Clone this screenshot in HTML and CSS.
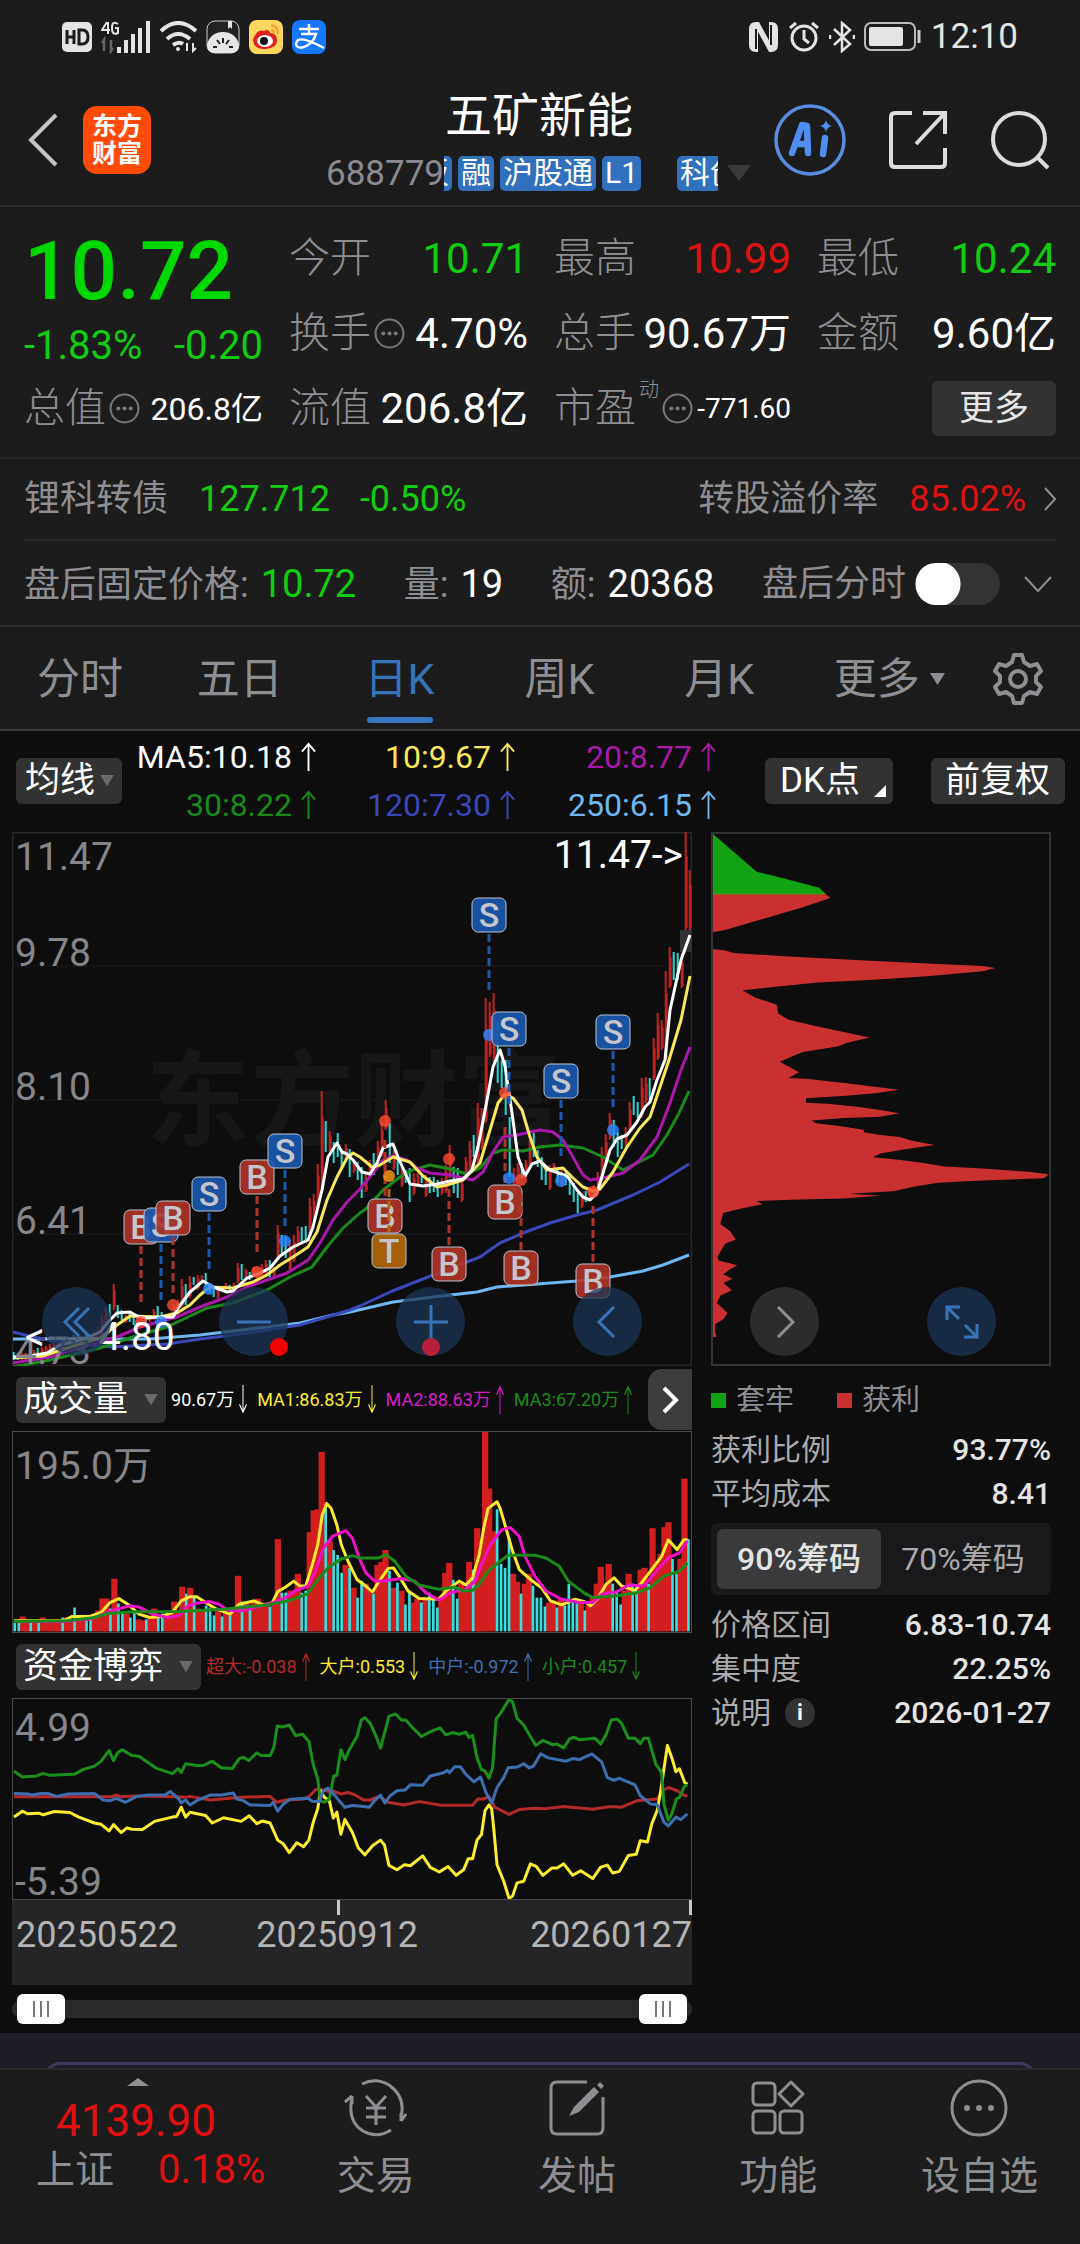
FILE: index.html
```html
<!DOCTYPE html>
<html lang="zh-CN">
<head>
<meta charset="utf-8">
<meta name="viewport" content="width=device-width, initial-scale=1">
<title>五矿新能 688779</title>
<link rel="stylesheet" href="styles.css">
</head>
<body>
<svg class="defs" aria-hidden="true">
  <symbol id="up" viewBox="0 0 16 30" preserveAspectRatio="none"><path d="M8 30V2M1 10L8 2l7 8"/></symbol>
  <symbol id="down" viewBox="0 0 16 30" preserveAspectRatio="none"><path d="M8 0v28M1 20l7 8 7-8"/></symbol>
  <symbol id="more" viewBox="0 0 30 30"><circle cx="15" cy="15" r="13.5" fill="none" stroke="#77777b" stroke-width="2"/><g fill="#77777b"><circle cx="9" cy="15" r="2"/><circle cx="15" cy="15" r="2"/><circle cx="21" cy="15" r="2"/></g></symbol>
</svg>

<div class="status">
  <div class="status-side">
    <svg width="30" height="30" viewBox="0 0 30 30"><rect width="30" height="30" rx="5" fill="#e4e4e4"/><path d="M5 8v14M12 8v14M5 15h7M17 8v14h3q6 0 6-7t-6-7z" fill="none" stroke="#1c1c1c" stroke-width="3"/></svg>
    <svg width="50" height="34" viewBox="0 0 50 34" fill="none" stroke="#e4e4e4"><path d="M6 2L1 10h8M7 2v12M17 4q-6-4-6 4t6 5V8h-3" stroke-width="2"/><path d="M3 31V20l-2 3M10 20v11l2-3" stroke="#666" stroke-width="2.500"/><path d="M18 27v6M25 20v13M32 14v19M39 8v25M47 1v32" stroke-width="4"/></svg>
    <svg width="37" height="32" viewBox="0 0 37 32" fill="none" stroke="#e4e4e4" stroke-width="4"><path d="M1 10Q18-6 36 10M7 18q11-10 23 0"/><path d="M13 24q6-4 10-1"/><circle cx="18" cy="28" r="2" fill="#e4e4e4" stroke="none"/><path d="M27 22v8M33 22v8l3-3" stroke-width="2"/></svg>
    <svg width="34" height="34" viewBox="0 0 34 34"><rect x="1" y="1" width="32" height="32" rx="8" fill="#222" stroke="#ccc"/><path d="M1 33V24Q5 12 17 12t16 12v1q0 8-8 8H9q-8 0-8-8z" fill="#e6e6e6"/><path d="M22 1h4v8l-2-2-2 2z" fill="#e6e6e6"/><path d="M17 18v5M11 20l3 4M23 20l-3 4M7 27h4M23 27h4" stroke="#222" stroke-width="2"/></svg>
    <svg width="34" height="34" viewBox="0 0 34 34"><rect width="34" height="34" rx="8" fill="#ffd75e"/><path d="M4 20Q8 8 15 11q5-3 6 2 6 0 7 6 1 9-11 10T4 20z" fill="#e02020"/><ellipse cx="16" cy="21" rx="8" ry="6" fill="#fff"/><circle cx="15" cy="21" r="4" fill="#111"/><path d="M22 5q7 1 7 9M22 10q3 0 3 4" fill="none" stroke="#f59a23" stroke-width="2"/></svg>
    <svg width="34" height="34" viewBox="0 0 34 34"><rect width="34" height="34" rx="8" fill="#1677ff"/><path d="M7 9h20M17 4v9M9 14h15q-2 7-8 11-6 4-10 2t0-7q6-3 26 8" fill="none" stroke="#fff" stroke-width="2.500"/></svg>
  </div>
  <div class="status-side">
    <svg width="31" height="32" viewBox="0 0 31 32"><path d="M10 1H8Q1 1 1 8v16q0 7 7 7h2zM21 31h2q7 0 7-7V8q0-7-7-7h-2z" fill="#e4e4e4"/><path d="M8 1h3l13 24v6h-3L8 7z" fill="#e4e4e4"/><path d="M8 8v20M23 4v20" stroke="#1c1c1c" stroke-width="2"/></svg>
    <svg width="32" height="32" viewBox="0 0 32 32" fill="none" stroke="#e4e4e4" stroke-width="3"><circle cx="16" cy="17" r="12"/><path d="M16 9v9l5 4M2 7l6-5M30 7l-6-5"/></svg>
    <svg width="26" height="32" viewBox="0 0 26 32" fill="none" stroke="#e4e4e4" stroke-width="2.500"><path d="M5 8l16 15-8 7V2l8 7L5 24"/><path d="M1 14v4M25 14v4"/></svg>
    <svg width="58" height="30" viewBox="0 0 58 30"><rect x="1" y="1" width="50" height="27" rx="6" fill="none" stroke="#bbb" stroke-width="2"/><rect x="5" y="5" width="34" height="19" rx="2" fill="#e4e4e4"/><path d="M55 8v13" stroke="#ccc" stroke-width="3"/></svg>
    <span class="clock">12:10</span>
  </div>
</div>

<header class="header">
  <div class="header-left">
    <button class="icon-btn" aria-label="返回"><svg width="30" height="54" viewBox="0 0 30 54" fill="none" stroke="#c4c4c4" stroke-width="4"><path d="M28 2L3 27l25 25"/></svg></button>
    <div class="logo">东方<br>财富</div>
  </div>
  <div class="title">
    <h1>五矿新能</h1>
    <div class="tags">
      <span class="code">688779</span>
      <div class="tag-window"><span class="tag tag-cut">板</span><span class="tag">融</span><span class="tag">沪股通</span><span class="tag">L1</span><span class="tag tag-next">科创</span></div>
      <svg width="24" height="16" viewBox="0 0 24 16"><path d="M0 0h24L12 16z" fill="#3a3a3a"/></svg>
    </div>
  </div>
  <div class="header-right">
    <button class="icon-btn" aria-label="AI"><svg width="72" height="72" viewBox="0 0 72 72"><circle cx="36" cy="36" r="34" fill="none" stroke="#5a8de0" stroke-width="3.500"/><g fill="none" stroke="#4f8df0" stroke-width="6.500" stroke-linejoin="round" stroke-linecap="round"><path d="M18 49l10-28 5 1 1 27M22 40h11"/><path d="M51 34l-2 16"/></g><path d="M52 16q1 5 6 6-5 1-6 6-1-5-6-6 5-1 6-6z" fill="#4f8df0"/></svg></button>
    <button class="icon-btn" aria-label="分享"><svg width="58" height="58" viewBox="0 0 58 58" fill="none" stroke="#dcdcdc" stroke-width="4"><path d="M23 2H6Q2 2 2 6v46q0 4 4 4h46q4 0 4-4V37M34 2h22v21M56 2L27 33"/></svg></button>
    <button class="icon-btn" aria-label="搜索"><svg width="60" height="60" viewBox="0 0 60 60" fill="none" stroke="#dcdcdc" stroke-width="4"><circle cx="29" cy="29" r="26"/><path d="M47 47l11 11"/></svg></button>
  </div>
</header>

<section class="quote">
  <div class="price">
    <strong>10.72</strong>
    <div class="change"><span>-1.83%</span><span>-0.20</span></div>
  </div>
  <div class="cell"><span>今开</span><b class="down">10.71</b></div>
  <div class="cell"><span>最高</span><b class="up">10.99</b></div>
  <div class="cell"><span>最低</span><b class="down">10.24</b></div>
  <div class="cell"><span>换手<svg width="31" height="31"><use href="#more"/></svg></span><b>4.70%</b></div>
  <div class="cell"><span>总手</span><b>90.67万</b></div>
  <div class="cell"><span>金额</span><b>9.60亿</b></div>
  <div class="cell"><span>总值<svg width="31" height="31"><use href="#more"/></svg></span><b class="b-mid">206.8亿</b></div>
  <div class="cell"><span>流值</span><b>206.8亿</b></div>
  <div class="cell"><span>市盈<sup>动</sup><svg width="31" height="31"><use href="#more"/></svg></span><b class="b-small">-771.60</b></div>
  <div class="cell cell-end"><button class="more-btn">更多</button></div>
</section>

<a class="bond" href="#bond">
  <span>锂科转债</span><span class="down bond-price">127.712</span><span class="down">-0.50%</span>
  <span class="push">转股溢价率</span><span class="up bond-rate">85.02%</span>
  <svg width="12" height="24" viewBox="0 0 12 24" fill="none" stroke="#8e8e93" stroke-width="2"><path d="M1 1l10 11L1 23"/></svg>
</a>

<div class="after">
  <span class="pair">盘后固定价格:<b class="down">10.72</b></span>
  <span class="pair">量:<b>19</b></span>
  <span class="pair">额:<b>20368</b></span>
  <div class="after-end">
    <label for="after-switch">盘后分时</label>
    <input type="checkbox" id="after-switch" class="switch">
    <svg width="28" height="17" viewBox="0 0 28 17" fill="none" stroke="#8e8e93" stroke-width="2"><path d="M1 1l13 14L27 1"/></svg>
  </div>
</div>

<nav class="tabs">
  <button>分时</button><button>五日</button><button class="active">日K</button><button>周K</button><button>月K</button>
  <button>更多<svg width="15" height="12" viewBox="0 0 15 12"><path d="M0 0h15L7.500 12z" fill="#8e8e93"/></svg></button>
  <button aria-label="设置"><svg width="52" height="52" viewBox="0 0 52 52" fill="none" stroke="#8e8e93" stroke-width="4" stroke-linejoin="round"><path d="M22 2h8l2 7 6 4 7-2 4 7-5 5v6l5 5-4 7-7-2-6 4-2 7h-8l-2-7-6-4-7 2-4-7 5-5v-6l-5-5 4-7 7 2 6-4z"/><circle cx="26" cy="26" r="8"/></svg></button>
</nav>

<main class="charts">
  <div class="ma-bar">
    <button class="chip-btn">均线<i class="tri"></i></button>
    <div class="ma-grid">
      <span class="c-white">MA5:10.18<svg><use href="#up"/></svg></span>
      <span class="c-yellow">10:9.67<svg><use href="#up"/></svg></span>
      <span class="c-purple">20:8.77<svg><use href="#up"/></svg></span>
      <span class="c-green">30:8.22<svg><use href="#up"/></svg></span>
      <span class="c-blue">120:7.30<svg><use href="#up"/></svg></span>
      <span class="c-sky">250:6.15<svg><use href="#up"/></svg></span>
    </div>
    <button class="chip-btn dk">DK点<svg width="12" height="12" viewBox="0 0 12 12"><path d="M12 0v12H0z" fill="#fff"/></svg></button>
    <button class="chip-btn fq">前复权</button>
  </div>

  <div class="cols">
    <div class="left">
      <div class="panel">
        <svg class="kline" viewBox="12 832 680 534">
          <g stroke="#262626" fill="none"><rect x="12.500" y="832.500" width="679" height="533" stroke-width="2"/><path d="M13 966h678M13 1100h678M13 1234h678" stroke-dasharray="2 2"/></g>
          <text x="146" y="1138" class="watermark">东方财富</text>
          <rect x="680" y="930" width="12" height="22" fill="#333"/>
          <g id="candles"></g>
          <g fill="none" stroke-width="3" stroke-linejoin="round">
            <polyline stroke="#6fb7ef" points="13,1339 100,1339 150,1339 200,1335 267,1327 300,1323 333,1315 350,1312 393,1302 433,1297 477,1292 497,1287 537,1284 577,1281 610,1277 643,1271 663,1265 689,1255"/>
            <polyline stroke="#3a48b8" points="13,1332 33,1337 60,1342 87,1345 113,1347 167,1344 200,1339 233,1335 267,1330 300,1325 327,1317 350,1310 360,1306 390,1292 433,1275 480,1257 500,1243 523,1233 550,1223 577,1215 597,1210 633,1195 660,1182 689,1164"/>
            <polyline stroke="#1a8a1a" points="13,1367 50,1360 100,1348 133,1337 167,1327 207,1308 233,1303 267,1290 290,1277 312,1267 327,1247 343,1228 360,1213 367,1208 383,1190 400,1177 413,1170 430,1165 450,1169 467,1174 480,1168 493,1153 503,1150 523,1151 540,1147 560,1145 583,1148 603,1157 623,1170 637,1163 653,1155 667,1135 678,1115 689,1091"/>
            <polyline stroke="#aa18aa" points="13,1363 50,1357 83,1347 117,1337 140,1327 177,1317 200,1307 227,1297 247,1287 267,1280 287,1273 308,1260 320,1243 333,1220 347,1202 360,1189 373,1173 383,1160 393,1156 407,1160 417,1168 430,1173 450,1175 473,1180 483,1172 493,1152 503,1137 517,1135 530,1132 540,1130 553,1132 563,1140 573,1157 583,1175 590,1180 603,1178 623,1173 640,1160 657,1137 670,1103 681,1070 690,1047"/>
            <polyline stroke="#fbe85a" points="13,1358 43,1356 67,1348 100,1338 117,1325 130,1316 160,1317 177,1313 190,1305 200,1295 210,1287 233,1288 253,1282 267,1275 280,1265 293,1257 308,1247 317,1232 327,1200 337,1177 347,1158 353,1153 360,1157 372,1167 380,1165 393,1157 410,1162 422,1175 437,1187 447,1185 463,1180 480,1163 490,1130 498,1103 505,1094 513,1098 522,1110 530,1137 537,1157 547,1170 563,1168 573,1178 583,1187 593,1191 600,1189 613,1172 627,1147 640,1128 650,1117 660,1087 669,1060 681,1020 690,976"/>
            <polyline stroke="#fff" points="13,1357 30,1356 47,1353 60,1345 73,1342 87,1338 100,1332 110,1320 117,1313 130,1312 137,1316 147,1318 160,1317 173,1317 178,1308 190,1292 203,1281 213,1287 227,1292 233,1291 247,1278 260,1273 270,1268 280,1256 293,1247 308,1240 313,1227 322,1190 328,1157 337,1143 342,1152 347,1154 353,1160 362,1172 370,1174 377,1163 383,1148 393,1144 398,1157 410,1184 423,1186 437,1184 450,1181 463,1179 472,1170 478,1147 487,1100 493,1067 500,1050 505,1066 512,1113 518,1157 525,1176 532,1164 540,1161 550,1170 567,1176 577,1190 583,1197 590,1200 597,1193 603,1173 610,1150 617,1139 627,1135 637,1122 645,1107 650,1102 657,1080 665,1060 670,1010 681,960 690,935"/>
          </g>
          <g id="marks"></g>
          <g class="axis"><text x="15" y="870">11.47</text><text x="15" y="966">9.78</text><text x="15" y="1100">8.10</text><text x="15" y="1234">6.41</text><text x="15" y="1364">4.73</text></g>
          <g class="extreme"><text x="683" y="868" text-anchor="end">11.47-&gt;</text><text x="25" y="1350">&lt;-----4.80</text></g>
        </svg>
        <div class="float-row">
          <button class="round" aria-label="快退"><svg width="32" height="32" viewBox="0 0 32 32"><path d="M18 2L4 16l14 14M28 2L14 16l14 14"/></svg></button>
          <button class="round" aria-label="缩小"><svg width="34" height="34" viewBox="0 0 34 34"><path d="M0 17h34"/></svg><i class="dot dot-side"></i></button>
          <button class="round" aria-label="放大"><svg width="34" height="34" viewBox="0 0 34 34"><path d="M0 17h34M17 0v34"/></svg><i class="dot"></i></button>
          <button class="round" aria-label="后退"><svg width="32" height="32" viewBox="0 0 32 32"><path d="M22 1L7 16l15 15"/></svg></button>
        </div>
      </div>

      <div class="sub-bar">
        <button class="chip-btn sub-btn">成交量<i class="tri"></i></button>
        <div class="legend">
          <span class="c-white">90.67万<svg><use href="#down"/></svg></span>
          <span class="c-lemon">MA1:86.83万<svg><use href="#down"/></svg></span>
          <span class="c-pink">MA2:88.63万<svg><use href="#up"/></svg></span>
          <span class="c-green">MA3:67.20万<svg><use href="#up"/></svg></span>
        </div>
        <button class="next" aria-label="下一指标"><svg width="18" height="28" viewBox="0 0 18 28" fill="none" stroke="#fff" stroke-width="4"><path d="M3 2l12 12L3 26"/></svg></button>
      </div>
      <div class="panel boxed">
        <svg class="stretch" viewBox="27 199 1524 605" preserveAspectRatio="none">
          <g id="volumes"></g>
          <g class="lines">
            <polyline stroke="#fde92f" points="29,770 140,770 160,757 200,757 225,745 245,715 265,703 285,720 310,750 335,760 360,757 385,745 405,710 425,697 440,697 460,715 485,735 515,750 535,720 568,710 590,722 610,715 622,682 640,668 658,650 672,665 685,665 700,600 712,540 722,450 732,415 742,430 755,480 765,540 780,590 800,645 820,665 835,683 850,650 870,612 882,610 895,635 915,680 940,703 985,705 1000,680 1030,650 1045,662 1060,640 1075,570 1085,490 1095,430 1115,410 1122,430 1135,490 1150,560 1165,615 1190,645 1215,670 1235,710 1260,722 1290,705 1312,712 1325,725 1340,705 1360,660 1378,640 1395,665 1425,678 1440,655 1460,620 1485,575 1500,525 1520,555 1535,525 1543,525"/>
            <polyline stroke="#f010c8" points="29,772 140,772 200,765 230,750 260,735 290,725 310,728 340,750 375,760 400,755 420,725 440,717 470,712 490,720 510,738 540,740 570,730 605,718 640,700 660,680 690,665 705,625 725,550 745,515 775,497 790,520 805,580 820,625 840,650 860,650 900,642 930,650 955,685 985,708 1010,685 1045,675 1065,650 1080,600 1100,540 1125,495 1145,488 1165,515 1178,575 1200,635 1225,680 1260,705 1300,715 1330,715 1350,690 1385,682 1410,662 1445,665 1470,625 1500,580 1525,565 1543,528"/>
            <polyline stroke="#1a8a1a" points="29,772 150,770 210,760 240,748 300,743 400,742 500,735 600,722 650,708 690,688 710,650 735,610 765,583 790,573 805,580 850,580 865,570 885,590 910,635 940,662 985,675 1020,668 1040,680 1060,678 1075,660 1095,620 1120,592 1140,572 1200,572 1225,580 1255,605 1275,650 1310,685 1330,700 1380,695 1430,685 1460,670 1490,635 1525,620 1543,595"/>
          </g>
        </svg>
        <span class="axis-label label-volume">195.0万</span>
      </div>

      <div class="sub-bar">
        <button class="chip-btn sub-btn">资金博弈<i class="tri"></i></button>
        <div class="legend">
          <span class="c-red">超大:-0.038<svg><use href="#up"/></svg></span>
          <span class="c-lemon">大户:0.553<svg><use href="#down"/></svg></span>
          <span class="c-steel">中户:-0.972<svg><use href="#up"/></svg></span>
          <span class="c-green">小户:0.457<svg><use href="#down"/></svg></span>
        </div>
      </div>
      <div class="panel boxed">
        <svg class="stretch" viewBox="27 171 1524 608" preserveAspectRatio="none">
          <g class="lines">
            <polyline stroke="#b32a2a" points="29,468 110,468 250,468 258,463 270,468 300,466 400,468 415,470 425,467 470,478 540,470 605,467 620,485 640,478 680,475 692,468 707,447 718,445 735,452 745,450 765,460 780,455 795,462 815,478 830,478 850,467 870,485 905,493 940,483 960,487 990,494 1060,494 1072,475 1085,475 1097,468 1110,500 1142,522 1165,507 1200,503 1220,505 1265,498 1330,506 1370,498 1395,500 1430,480 1475,475 1490,447 1500,440 1520,450 1537,465 1543,465"/>
            <polyline stroke="#fdec2f" points="29,530 48,512 60,520 85,518 95,523 120,513 155,516 175,530 210,548 225,552 243,572 253,553 270,577 283,563 295,567 318,568 345,543 385,530 395,528 405,500 415,530 425,515 460,525 475,548 500,532 540,543 558,526 575,550 587,542 605,548 622,600 635,612 648,638 665,608 680,620 692,600 702,545 712,505 718,450 727,470 738,480 747,533 755,515 764,582 773,537 790,577 803,623 818,645 835,617 853,600 862,615 872,677 890,690 907,675 920,678 948,648 965,683 985,697 1005,680 1023,707 1040,690 1050,657 1060,657 1070,600 1080,583 1088,510 1097,493 1103,505 1108,570 1115,675 1130,725 1142,777 1150,770 1160,730 1175,725 1190,672 1203,680 1218,707 1238,685 1250,685 1265,672 1285,707 1303,693 1330,717 1348,682 1363,676 1375,700 1390,695 1410,647 1428,643 1437,602 1453,606 1463,550 1475,510 1483,450 1490,385 1498,312 1508,350 1517,392 1525,383 1537,425 1543,430"/>
            <polyline stroke="#1a8f1a" points="29,390 48,408 80,405 95,397 110,403 165,400 185,385 210,375 225,360 243,328 253,358 262,335 272,325 295,343 310,345 350,382 385,398 398,383 405,395 415,368 440,373 455,373 475,360 495,380 520,382 535,353 545,348 557,358 575,335 585,343 605,343 613,320 621,253 632,256 648,250 662,282 678,278 692,300 702,370 712,415 718,480 727,485 738,475 748,405 755,403 764,325 773,355 783,325 800,285 810,235 818,228 830,245 845,290 853,320 863,270 872,223 887,217 900,235 910,235 925,258 945,285 965,270 987,259 1000,280 1015,273 1030,278 1045,272 1052,288 1060,282 1070,350 1080,385 1088,390 1097,412 1105,380 1113,232 1125,210 1142,172 1150,180 1160,230 1175,250 1190,285 1202,312 1218,297 1240,310 1250,308 1265,320 1278,292 1288,287 1300,295 1335,290 1348,308 1360,280 1372,235 1385,232 1395,245 1410,290 1425,290 1437,307 1445,290 1455,290 1472,370 1485,395 1490,490 1500,540 1508,520 1518,475 1525,470 1537,435 1543,432"/>
            <polyline stroke="#3d6fb0" points="29,458 60,460 70,463 90,458 105,458 125,467 150,460 210,458 230,478 245,480 260,473 280,485 305,467 330,463 370,462 380,452 400,475 405,487 415,478 425,493 440,480 470,463 495,463 522,457 530,475 545,480 560,493 605,495 612,485 622,512 635,490 650,476 690,473 700,482 715,483 725,450 735,442 748,460 760,480 773,500 790,495 810,497 828,500 840,480 853,463 863,487 875,465 890,450 908,448 920,432 948,433 965,405 995,395 1003,388 1008,395 1020,377 1033,377 1045,400 1063,423 1078,408 1090,455 1103,487 1115,440 1130,410 1140,380 1160,378 1175,368 1187,380 1197,375 1213,338 1230,350 1270,360 1285,352 1300,355 1328,338 1350,362 1363,410 1378,418 1390,412 1425,432 1437,465 1460,490 1475,492 1490,545 1500,557 1517,530 1528,538 1543,520"/>
          </g>
        </svg>
        <span class="axis-label label-max">4.99</span>
        <span class="axis-label label-min">-5.39</span>
      </div>
      <div class="dates"><span>20250522</span><span class="tick">20250912</span><span class="tick tick-end">20260127</span></div>
      <div class="range">
        <input type="range" min="0" max="100" value="0" aria-label="起始日期">
        <input type="range" min="0" max="100" value="100" aria-label="结束日期">
      </div>
    </div>

    <aside class="right">
      <div class="panel chips">
        <svg viewBox="33 226 1018 1310" preserveAspectRatio="none">
          <path fill="#12a312" d="M33 226L165 319 240 334 355 359 375 375H33z"/>
          <path fill="#ca3030" d="M33 375H375L389 384 300 408 180 437 70 463 33 469zM33 510L70 514 95 520 250 528 450 537 650 545 850 552 889 557 850 565 690 577 520 586 350 593 245 602 122 612 160 630 226 648 231 670 262 685 340 700 507 729 440 742 410 751 305 765 235 789 294 815 262 829 315 831 450 843 597 858 525 867 435 873 315 879 315 890 380 893 470 900 540 908 597 916 540 925 430 928 333 934 345 941 415 948 490 957 490 963 540 970 600 975 630 983 704 995 615 1005 540 1016 517 1025 595 1031 660 1038 735 1048 850 1053 990 1061 1051 1067 1035 1077 830 1083 715 1088 640 1098 580 1109 445 1115 541 1120 425 1127 270 1130 165 1133 183 1141 115 1152 64 1163 55 1190 85 1208 102 1228 70 1239 47 1270 50 1280 107 1292 85 1302 64 1314 92 1325 65 1336 90 1354 55 1367 45 1385 77 1410 65 1425 40 1437 38 1455 44 1468 33 1470z"/>
          <path d="M33 375H375" stroke="#8a6a20" stroke-width="3"/>
        </svg>
        <div class="float-row">
          <button class="round gray" aria-label="前进"><svg width="32" height="32" viewBox="0 0 32 32"><path d="M9 1l15 15L9 31"/></svg></button>
          <button class="round" aria-label="全屏"><svg width="34" height="34" viewBox="0 0 34 34"><path d="M2 15V2h13M2 2l12 12M32 19v13H19M32 32L20 20"/></svg></button>
        </div>
      </div>
      <div class="chip-legend"><span><i class="sq g"></i>套牢</span><span><i class="sq r"></i>获利</span></div>
      <dl>
        <div><dt>获利比例</dt><dd>93.77%</dd></div>
        <div><dt>平均成本</dt><dd>8.41</dd></div>
      </dl>
      <div class="seg"><button class="on">90%筹码</button><button>70%筹码</button></div>
      <dl>
        <div><dt>价格区间</dt><dd>6.83-10.74</dd></div>
        <div><dt>集中度</dt><dd>22.25%</dd></div>
        <div><dt>说明<i class="info">i</i></dt><dd>2026-01-27</dd></div>
      </dl>
    </aside>
  </div>
</main>

<div class="peek"><div class="peek-card"></div></div>

<footer class="bottom">
  <a class="index" href="#index">
    <svg width="22" height="8" viewBox="0 0 22 8"><path d="M0 8L11 0l11 8z" fill="#8e8e93"/></svg>
    <strong>4139.90</strong>
    <span>上证<b>0.18%</b></span>
  </a>
  <a href="#trade"><svg width="64" height="58" viewBox="0 0 64 58" fill="none" stroke="#8e8e93" stroke-width="3"><path d="M18 5Q32-2 45 6 62 18 57 38M57 42l5-7M57 42l0-8M47 51Q33 60 19 52 3 42 8 19M8 17l-7 6M8 17v8"/><path d="M22 17l10 11 10-11M32 28v18M22 29h20M22 38h20"/></svg>交易</a>
  <a href="#post"><svg width="56" height="58" viewBox="0 0 56 58" fill="none" stroke="#8e8e93" stroke-width="3"><path d="M38 3H8Q2 3 2 9v40q0 6 6 6h40q6 0 6-6V18"/><path d="M20 37l5-9L45 8l5 5-20 20zM48 6l3-3 4 4-3 3z" fill="#8e8e93" stroke="none"/></svg>发帖</a>
  <a href="#tools"><svg width="54" height="58" viewBox="0 0 54 58" fill="none" stroke="#8e8e93" stroke-width="3"><rect x="2" y="4" width="22" height="22" rx="4"/><rect x="2" y="32" width="22" height="22" rx="4"/><rect x="29" y="32" width="22" height="22" rx="4"/><path d="M40 3l12 12-12 12-12-12z" stroke-linejoin="round"/></svg>功能</a>
  <a href="#watch"><svg width="58" height="58" viewBox="0 0 58 58"><circle cx="29" cy="29" r="27" fill="none" stroke="#8e8e93" stroke-width="3"/><g fill="#8e8e93"><circle cx="17" cy="29" r="3"/><circle cx="29" cy="29" r="3"/><circle cx="41" cy="29" r="3"/></g></svg>设自选</a>
</footer>
<script src="charts.js"></script>
</body>
</html>
```
FILE: charts.js
```js
// Daily volume; a negative value marks a day that closed lower.
const volumes = [
  -9,-9,15,12,-9,10,-9,14,12,11,12,10,-14,14,12,-24,14,14,-13,-13,17,21,33,33,-23,53,-28,-20,18,-14,
  -21,12,11,-12,13,23,-17,-18,13,19,30,21,45,-38,44,-34,23,22,-26,-24,-16,23,-15,19,-16,23,56,-30,29,-26,
  29,33,29,26,-25,28,93,-39,-39,41,41,58,-39,-41,100,122,123,181,-126,91,-82,-77,-59,67,-64,44,-34,-51,48,41,
  -38,67,70,82,-61,44,-49,41,-27,-41,29,33,-29,32,-39,-33,-24,36,59,69,-52,-33,48,44,70,-62,104,87,201,144,
  101,-123,-68,-64,-95,58,50,-38,48,58,-46,-34,-34,-25,29,31,-24,33,-26,-48,-33,-28,31,-21,26,34,48,65,48,68,
  -48,-39,-27,41,58,-48,-41,62,64,-48,104,71,78,105,110,-73,-58,73,154,-93
];

// [high, low] of each day, in chart space.
const ranges = [
  [1352,1360],[1353,1360],[1352,1360],[1353,1361],[1353,1358],[1350,1358],[1348,1356],[1347,1355],[1346,1353],[1344,1352],
  [1342,1350],[1341,1349],[1340,1348],[1338,1346],[1337,1345],[1335,1344],[1337,1344],[1336,1343],[1333,1342],[1334,1342],
  [1332,1340],[1327,1339],[1315,1336],[1307,1325],[1304,1317],[1284,1310],[1305,1318],[1310,1320],[1315,1323],[1313,1322],
  [1315,1325],[1317,1326],[1318,1327],[1318,1325],[1315,1322],[1309,1320],[1306,1317],[1312,1323],[1315,1323],[1313,1320],
  [1305,1318],[1300,1315],[1279,1308],[1284,1305],[1276,1298],[1277,1285],[1275,1290],[1275,1280],[1273,1287],[1283,1293],
  [1287,1297],[1287,1299],[1286,1291],[1283,1290],[1285,1293],[1283,1290],[1263,1283],[1264,1280],[1269,1277],[1272,1280],
  [1267,1277],[1267,1280],[1264,1277],[1260,1275],[1260,1277],[1267,1277],[1225,1260],[1235,1253],[1237,1258],[1240,1270],
  [1235,1262],[1226,1247],[1227,1242],[1226,1243],[1198,1233],[1194,1223],[1164,1210],[1091,1193],[1121,1152],[1131,1152],
  [1142,1163],[1133,1157],[1150,1170],[1144,1160],[1149,1177],[1160,1173],[1162,1180],[1167,1198],[1173,1192],[1160,1177],
  [1153,1175],[1141,1163],[1122,1157],[1100,1130],[1123,1163],[1150,1170],[1160,1175],[1167,1187],[1170,1183],[1168,1202],
  [1173,1195],[1173,1187],[1173,1183],[1175,1197],[1177,1193],[1177,1192],[1180,1197],[1178,1195],[1165,1193],[1145,1178],
  [1167,1193],[1168,1198],[1178,1202],[1157,1177],[1141,1173],[1135,1157],[1103,1163],[1108,1150],[998,1123],[1002,1057],
  [993,1062],[1022,1083],[1061,1088],[1060,1115],[1117,1177],[1168,1193],[1163,1180],[1163,1178],[1160,1177],[1140,1167],
  [1133,1157],[1150,1167],[1157,1180],[1167,1185],[1165,1190],[1163,1170],[1168,1183],[1170,1187],[1172,1185],[1177,1195],
  [1183,1202],[1193,1213],[1193,1208],[1191,1202],[1187,1200],[1185,1197],[1172,1188],[1147,1182],[1134,1167],[1113,1140],
  [1120,1147],[1132,1157],[1135,1149],[1127,1147],[1102,1133],[1096,1115],[1102,1118],[1078,1118],[1077,1103],[1078,1103],
  [1038,1080],[1013,1060],[1020,1050],[971,1060],[947,988],[952,980],[953,980],[953,988],[832,930],[870,930]
];

// Trades: letter, badge centre x/y, dash start/end, marker y.
const trades = [
  ['B',141,1227,1246,1302,1322],['S',161,1225,1244,1300,1322],['B',173,1218,1237,1295,1305],
  ['S',209,1194,1213,1270,1289],['B',257,1177,1196,1252,1272],['S',285,1151,1170,1226,1241],
  ['B',385,1216,1140,1198,1121],['T',389,1251,1189,1232,1176],['B',449,1264,1189,1245,1159],
  ['B',505,1202,1127,1184,1093],['B',521,1268,1194,1250,1180],['B',593,1281,1206,1262,1192],
  ['S',561,1081,1100,1156,1181],['S',489,915,934,990,1035],['S',509,1029,1048,1105,1178],
  ['S',613,1032,1051,1107,1130]
];
const tone = { B: ['#b03426', '#ff4a30'], S: ['#1959b0', '#2a86ff'], T: ['#b56a0a', '#ff9a1a'] };

const last = volumes.length - 1;
let bars = '', downBars = '', candles = '';
volumes.forEach((v, i) => {
  const x = 31 + 8.96 * i, h = Math.abs(v) * 3;
  if (v > 0) bars += `<rect x="${x - 7}" y="${802 - h}" width="14" height="${h}" fill="#d21e1e"/>`;
  else downBars += `<rect x="${x - 3}" y="${802 - h}" width="6" height="${h}" fill="#3adede"/>`;
  const up = v > 0 || i === last;
  const cx = 13.7 + 4 * i, [hi, lo] = ranges[i];
  candles += `<path d="M${cx} ${hi}V${lo}" stroke="${up ? '#c22222' : '#28d8d8'}" stroke-width="2"/>`;
  if (up) candles += `<path d="M${cx + 1} ${hi + (lo - hi) * 0.25}V${lo - 2}" stroke="#c22222" stroke-width="2"/>`;
});
document.getElementById('volumes').innerHTML = bars + downBars;
document.getElementById('candles').innerHTML = candles;

document.getElementById('marks').innerHTML = trades.map(([t, x, y, a, b, m]) =>
  `<path d="M${x} ${a}V${b}" stroke="${tone[t][0]}" stroke-width="3" stroke-dasharray="8 4"/>` +
  `<circle cx="${x}" cy="${m}" r="6" fill="${tone[t][1]}" fill-opacity=".8"/>` +
  `<rect x="${x - 17}" y="${y - 17}" width="34" height="34" rx="6" fill="${tone[t][0]}" fill-opacity=".9" stroke="#b9c3d2"/>` +
  `<text class="mark" x="${x}" y="${y + 12}">${t}</text>`).join('');
```
FILE: styles.css
```css
* { box-sizing: border-box; }
body {
  margin: 0;
  min-height: 100vh;
  display: flex;
  flex-direction: column;
  background: #1c1c1c;
  color: #8e8e93;
  font-family: Roboto, "Noto Sans CJK SC", sans-serif;
  font-size: 36px;
  line-height: 1;
}
button { font: inherit; color: inherit; background: none; border: 0; padding: 0; }
a { color: inherit; text-decoration: none; }
b { font-weight: 400; color: #fff; }
svg { display: block; flex: none; }
.defs { position: absolute; width: 0; height: 0; }
.down, b.down { color: #12cc12; }
.up, b.up { color: #dc1212; }

.status { display: flex; justify-content: space-between; align-items: center; height: 74px; padding: 0 62px; }
.status-side { display: flex; align-items: center; gap: 9px; }
.clock { font-size: 35px; line-height: 36px; color: #e4e4e4; }

.header { display: grid; grid-template-columns: 1fr 426px 1fr; height: 133px; padding: 0 30px 0 28px; border-bottom: 2px solid #2c2c2c; }
.header-left { display: flex; align-items: center; gap: 25px; }
.logo { width: 68px; height: 68px; padding: 7px 0; border-radius: 14px; background: #ff4a08; color: #fff; font-size: 25px; line-height: 27px; font-weight: 700; text-align: center; }
.title { text-align: center; padding-top: 16px; }
.title h1 { margin: 0; font-size: 47px; line-height: 52px; font-weight: 400; color: #fff; }
.tags { display: flex; align-items: center; margin-top: 13px; height: 36px; }
.code { font-size: 35px; color: #8a8a90; }
.tag-window { display: flex; gap: 6px; width: 274px; overflow: hidden; }
.tag { flex: none; padding: 0 3px; height: 35px; border-radius: 5px; background: #3070bd; color: #fff; font-size: 30px; line-height: 34px; }
.tag-cut { margin-left: -28px; }
.tag-next { margin-left: 30px; }
.tags svg { margin-left: 9px; }
.header-right { display: flex; justify-content: flex-end; align-items: center; gap: 43px; }

.quote { display: grid; grid-template-columns: 239px 239px 237px 239px; column-gap: 26px; grid-template-rows: repeat(3, 75px); padding: 14px 23px 11px 24px; border-bottom: 2px solid #262626; height: 252px; }
.price { grid-row: span 2; }
.price strong { display: block; margin-top: 12px; font-size: 82px; line-height: 76px; font-weight: 500; color: #00d800; }
.change { display: flex; justify-content: space-between; margin-top: 15px; font-size: 40px; line-height: 44px; color: #12cc12; }
.cell { display: flex; justify-content: space-between; align-items: center; font-size: 41px; white-space: nowrap; }
.cell > span { display: flex; align-items: center; gap: 3px; font-weight: 300; }
.cell b { font-size: 42px; }
.cell b.b-mid { font-size: 32px; }
.cell b.b-small { font-size: 28px; }
.cell sup { align-self: flex-start; margin-top: -8px; font-size: 20px; line-height: 20px; vertical-align: top; }
.cell-end { justify-content: flex-end; }
.more-btn { width: 124px; height: 55px; border-radius: 6px; background: #323232; color: #e6e6e6; font-size: 35px; }

.bond { display: flex; align-items: center; height: 82px; margin: 0 24px; border-bottom: 2px solid #282828; }
.bond-price { margin: 0 30px 0 31px; }
.push { margin-left: auto; }
.bond-rate { margin: 0 18px 0 31px; }
.after { display: flex; align-items: center; justify-content: space-between; height: 86px; padding: 2px 28px 0 24px; border-bottom: 2px solid #303030; }
.pair b { margin-left: 12px; font-size: 38px; }
.after-end { display: flex; align-items: center; }
.switch { appearance: none; width: 85px; height: 42px; margin: 0 24px 0 9px; border-radius: 21px; background: radial-gradient(circle at 23px 50%, #fff 22px, transparent 23px) #333; }
.tabs { display: grid; grid-template-columns: repeat(5, 160fr) 180fr 78fr; align-items: center; justify-items: center; height: 104px; padding: 2px 23px 0 0; border-bottom: 2px solid #363636; }
.tabs button { position: relative; display: flex; align-items: center; gap: 10px; height: 90px; font-size: 43px; line-height: 60px; }
.tabs .active { color: #3673b9; }
.tabs .active::after { content: ""; position: absolute; left: 2px; right: 2px; bottom: 1px; height: 6px; border-radius: 3px; background: #3673b9; }

.charts { background: #0d0d0d; }
.ma-bar { display: flex; align-items: center; height: 101px; padding: 0 15px 2px 16px; }
.chip-btn { position: relative; display: flex; align-items: center; height: 46px; padding: 0 8px 0 9px; gap: 5px; border-radius: 6px; background: #323232; color: #fff; font-size: 35px; line-height: 44px; white-space: nowrap; }
.tri { width: 14px; height: 12px; background: #6a6a6a; clip-path: polygon(0 0, 100% 0, 50% 100%); }
.ma-grid { display: grid; grid-template-columns: 180px 199px 201px; row-gap: 12px; margin: 0 auto 0 14px; font-size: 32px; line-height: 36px; }
.ma-grid span { display: flex; justify-content: flex-end; align-items: center; gap: 9px; }
.ma-grid svg { width: 15px; height: 29px; }
.ma-grid svg, .legend svg { stroke: currentColor; stroke-width: 2; fill: none; }
.dk { width: 128px; padding-left: 15px; }
.dk svg { position: absolute; right: 7px; bottom: 7px; }
.fq { width: 134px; padding-left: 14px; margin-left: 38px; }
.c-white { color: #fff; } .c-yellow { color: #fbe85a; } .c-lemon { color: #fdec2f; }
.c-purple { color: #aa18aa; } .c-pink { color: #d81bc8; } .c-green { color: #1a8a1a; }
.c-blue { color: #3a48b8; } .c-sky { color: #6fb7ef; } .c-red { color: #b32a2a; } .c-steel { color: #3d6fb0; }

.cols { display: grid; grid-template-columns: 680fr 340fr; column-gap: 19px; padding: 0 29px 0 12px; }
.left, .right { min-width: 0; }
.panel { position: relative; }
.kline { width: 100%; height: auto; }
.axis { fill: #85858a; font-size: 39px; }
.extreme { fill: #fff; font-size: 39px; }
.watermark { fill: #161616; font-size: 104px; font-weight: 700; }
.mark { fill: #c5c5cc; font-size: 34px; font-weight: 500; text-anchor: middle; }
.float-row { position: absolute; left: 30px; bottom: 10px; display: flex; gap: 108px; }
.chips .float-row { left: 37px; bottom: 8px; }
.round { position: relative; display: grid; place-items: center; width: 69px; height: 69px; border-radius: 50%; background: rgba(28, 52, 84, .75); }
.round svg { fill: none; stroke: #3673b9; stroke-width: 3; }
.round.gray { background: #2c2c2c; }
.round.gray svg { stroke: #8e8e93; }
.dot { position: absolute; left: 26px; bottom: 0; width: 18px; height: 18px; border-radius: 50%; background: #b8203a; }
.dot-side { left: 51px; background: #f00000; }

.sub-bar { display: flex; align-items: center; height: 65px; padding-top: 2px; }
.sub-btn { flex: none; margin-left: 4px; padding: 0 8px 0 7px; gap: 16px; }
.legend { display: flex; gap: 10px; margin-left: 5px; font-size: 18px; line-height: 30px; white-space: nowrap; }
.legend span { display: flex; align-items: center; gap: 5px; }
.legend svg { width: 8px; height: 29px; }
.next { display: grid; place-items: center; width: 44px; height: 61px; margin-left: auto; border-radius: 14px 0 0 14px; background: #3c3c3e; }
.boxed { border: 1px solid #4a4a4a; height: 202px; }
.stretch { width: 100%; height: 200px; }
.lines { fill: none; }
.lines polyline { stroke-width: 3px; stroke-linejoin: round; vector-effect: non-scaling-stroke; }
.axis-label { position: absolute; left: 2px; color: #85858a; font-size: 39px; line-height: 44px; }
.label-volume { top: 12px; }
.label-max { top: 7px; }
.label-min { bottom: -5px; }
.dates { display: grid; grid-template-columns: 242fr 160fr 276fr; height: 85px; padding: 17px 0 0 4px; background: #252527; color: #b4b4b4; font-size: 36px; line-height: 36px; }
.dates span { position: relative; }
.tick::before { content: ""; position: absolute; top: -17px; left: 50%; width: 3px; height: 15px; background: #c8c8c8; }
.tick-end { text-align: right; }
.tick-end::before { left: auto; right: 0; }
.range { position: relative; height: 48px; }
.range::before { content: ""; position: absolute; inset: 15px 0; border-radius: 9px; background: #2a2a2c; }
.range input { appearance: none; position: absolute; inset: 9px 5px; width: calc(100% - 10px); height: 30px; margin: 0; background: none; pointer-events: none; }
.range input::-webkit-slider-thumb {
  appearance: none; pointer-events: auto; width: 48px; height: 30px; border-radius: 6px;
  background: linear-gradient(90deg, #777 2px, transparent 2px 7px, #777 7px 9px, transparent 9px 14px, #777 14px 16px) center / 16px 16px no-repeat #fff;
}

.chips { border: 2px solid #333; height: 534px; }
.chips > svg { width: 100%; height: 530px; }
.chip-legend { display: flex; gap: 43px; height: 62px; padding-top: 6px; align-items: center; font-size: 29px; }
.chip-legend span { display: flex; align-items: center; gap: 10px; }
.sq { width: 15px; height: 15px; }
.g { background: #12a312; }
.r { background: #ca3030; }
dl { margin: 0; font-size: 30px; line-height: 44px; color: #aaaaad; }
dl div { display: flex; justify-content: space-between; }
dt { display: flex; align-items: center; }
dd { margin: 0; font-weight: 500; color: #e4e4e4; }
.seg { display: flex; height: 72px; margin: 7px 0 8px; padding: 6px; border-radius: 6px; background: #19191b; font-size: 32px; color: #aaaaad; }
.seg button { flex: 1; border-radius: 6px; }
.seg .on { background: #3a3a3c; color: #e4e4e4; font-weight: 500; }
.info { width: 30px; margin-left: 14px; border-radius: 50%; background: #333; color: #fff; font-style: normal; font-size: 22px; line-height: 30px; font-weight: 700; text-align: center; }

.peek { height: 35px; padding: 29px 44px 0; background: #1f1e26; overflow: hidden; }
.peek-card { height: 40px; border: 3px solid #3a3a5a; border-radius: 16px; }
.bottom { flex: 1; display: grid; grid-template-columns: 275fr 201fr 201fr 201fr 201fr; border-top: 2px solid #2a2a2a; background: #1c1c1c; font-size: 39px; }
.bottom a { display: flex; flex-direction: column; align-items: center; gap: 19px; padding-top: 9px; line-height: 40px; }
.bottom .index { gap: 0; padding-top: 8px; padding-left: 24px; align-items: flex-start; }
.index svg { margin-left: 103px; }
.index strong { margin: 10px 0 0 32px; font-size: 44px; line-height: 50px; font-weight: 400; color: #e01010; }
.index span { display: flex; gap: 44px; margin-left: 12px; line-height: 48px; }
.index b { font-size: 40px; color: #e01010; }
```
